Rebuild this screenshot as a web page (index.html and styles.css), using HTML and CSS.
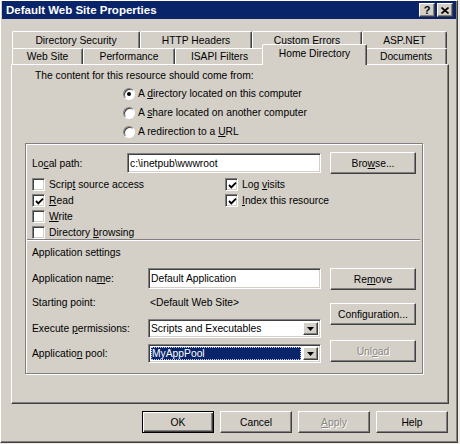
FILE: index.html
```html
<!DOCTYPE html>
<html lang="en">
<head>
<meta charset="utf-8">
<title>Default Web Site Properties</title>
<link rel="stylesheet" href="styles.css">
</head>
<body>
<div class="window">
  <div class="titlebar">
    <span class="title">Default Web Site Properties</span>
    <div class="caption-buttons">
      <span class="cap-btn cap-help">?</span>
      <span class="cap-btn">
        <svg width="8" height="7" viewBox="0 0 8 7"><path d="M0.5 0.5 L7.5 6.5 M7.5 0.5 L0.5 6.5" stroke="#000" stroke-width="1.6"/></svg>
      </span>
    </div>
  </div>

  <div class="client">
    <div class="tabs">
      <div class="tab-row tab-row-back">
        <span class="tab tab-dirsec">Directory Security</span>
        <span class="tab tab-http">HTTP Headers</span>
        <span class="tab tab-errors">Custom Errors</span>
        <span class="tab tab-aspnet">ASP.NET</span>
      </div>
      <div class="tab-row tab-row-front">
        <span class="tab tab-website">Web Site</span>
        <span class="tab tab-perf">Performance</span>
        <span class="tab tab-isapi">ISAPI Filters</span>
        <span class="tab tab-home selected">Home Directory</span>
        <span class="tab tab-docs">Documents</span>
      </div>
    </div>

    <div class="panel">
      <p class="prompt">The content for this resource should come from:</p>
      <div class="radios">
        <div class="radio"><span class="radio-dot on"></span><span>A <u>d</u>irectory located on this computer</span></div>
        <div class="radio"><span class="radio-dot"></span><span>A <u>s</u>hare located on another computer</span></div>
        <div class="radio"><span class="radio-dot"></span><span>A redirection to a <u>U</u>RL</span></div>
      </div>

      <div class="group">
        <div class="path-row">
          <span class="path-label">Lo<u>c</u>al path:</span>
          <span class="field path-field">c:\inetpub\wwwroot</span>
          <span class="btn browse-btn">Bro<u>w</u>se...</span>
        </div>

        <div class="checks">
          <div class="check"><span class="box"></span><span>Scrip<u>t</u> source access</span></div>
          <div class="check"><span class="box"><svg width="9" height="9" viewBox="0 0 9 9"><polyline points="1,4 3.3,6.3 8,1.6" fill="none" stroke="#000" stroke-width="1.9"/></svg></span><span>Log <u>v</u>isits</span></div>
          <div class="check"><span class="box"><svg width="9" height="9" viewBox="0 0 9 9"><polyline points="1,4 3.3,6.3 8,1.6" fill="none" stroke="#000" stroke-width="1.9"/></svg></span><span><u>R</u>ead</span></div>
          <div class="check"><span class="box"><svg width="9" height="9" viewBox="0 0 9 9"><polyline points="1,4 3.3,6.3 8,1.6" fill="none" stroke="#000" stroke-width="1.9"/></svg></span><span><u>I</u>ndex this resource</span></div>
          <div class="check"><span class="box"></span><span><u>W</u>rite</span></div>
          <div class="check-empty"></div>
          <div class="check"><span class="box"></span><span>Directory <u>b</u>rowsing</span></div>
        </div>

        <div class="separator"></div>
        <div class="app-title">Application settings</div>

        <div class="app">
          <div class="app-fields">
            <div class="app-row row-name">
              <span>Application na<u>m</u>e:</span>
              <span class="field">Default Application</span>
            </div>
            <div class="app-row row-start">
              <span>Starting point:</span>
              <span class="start-value">&lt;Default Web Site&gt;</span>
            </div>
            <div class="app-row row-exec">
              <span>Execute <u>p</u>ermissions:</span>
              <span class="field combo">
                <span class="combo-text">Scripts and Executables</span>
                <span class="combo-btn"><svg width="7" height="4" viewBox="0 0 7 4"><polygon points="0,0 7,0 3.5,4" fill="#000"/></svg></span>
              </span>
            </div>
            <div class="app-row row-pool">
              <span>Applicatio<u>n</u> pool:</span>
              <span class="field combo">
                <span class="combo-text"><span class="combo-sel">MyAppPool</span></span>
                <span class="combo-btn"><svg width="7" height="4" viewBox="0 0 7 4"><polygon points="0,0 7,0 3.5,4" fill="#000"/></svg></span>
              </span>
            </div>
          </div>
          <div class="app-buttons">
            <span class="btn btn-remove">Re<u>m</u>ove</span>
            <span class="btn btn-config">Confi<u>g</u>uration...</span>
            <span class="btn btn-unload disabled">Unl<u>o</u>ad</span>
          </div>
        </div>
      </div>
    </div>

    <div class="footer">
      <span class="btn dlg-btn btn-default">OK</span>
      <span class="btn dlg-btn">Cancel</span>
      <span class="btn dlg-btn disabled"><u>A</u>pply</span>
      <span class="btn dlg-btn">Help</span>
    </div>
  </div>
</div>
</body>
</html>
```

FILE: styles.css
```css
* {
  box-sizing: border-box;
}

html,
body {
  margin: 0;
  padding: 0;
}

body {
  width: 460px;
  height: 444px;
  overflow: hidden;
  background: #ece9e4;
  font-family: "Liberation Sans", Arial, sans-serif;
  font-size: 10.3px;
  color: #000;
}

u {
  text-decoration: underline;
  text-underline-offset: 1px;
}

/* window frame */
.window {
  width: 458px;
  height: 443px;
  background: #d4d0c8;
  border: 1px solid;
  border-color: #fff #404040 #404040 #fff;
  box-shadow: inset -1px -1px #808080;
  padding: 0 1px;
  display: flex;
  flex-direction: column;
}

.titlebar {
  height: 18px;
  background: #0a246a;
  display: flex;
  align-items: center;
  justify-content: space-between;
  padding: 0 3px 0 4px;
}

.title {
  color: #fff;
  font-weight: bold;
  font-size: 11.5px;
}

.caption-buttons {
  display: flex;
  gap: 2px;
}

.cap-btn {
  width: 16px;
  height: 14px;
  background: #d4d0c8;
  border: 1px solid;
  border-color: #fff #404040 #404040 #fff;
  box-shadow: inset -1px -1px #808080;
  display: flex;
  align-items: center;
  justify-content: center;
  font-weight: bold;
  font-size: 11px;
  line-height: 1;
}

.client {
  padding: 12px 0 0 9px;
  display: flex;
  flex-direction: column;
}

/* tab strip */
.tabs {
  margin-left: 1px;
  width: 435px;
}

.tab-row {
  display: flex;
}

.tab-row-back {
  height: 17px;
}

.tab-row-front {
  height: 16px;
}

.tab {
  flex: none;
  display: flex;
  align-items: center;
  justify-content: center;
  background: #d4d0c8;
  border-top: 1px solid #fff;
  border-left: 1px solid #fff;
  border-right: 1px solid #404040;
  box-shadow: inset -1px 0 #808080;
  border-radius: 2px 2px 0 0;
  white-space: nowrap;
}

.tab-dirsec { width: 128px; }
.tab-http { width: 112px; }
.tab-errors { width: 110px; }
.tab-aspnet { width: 85px; }
.tab-website { width: 71px; }
.tab-perf { width: 92px; }
.tab-isapi { width: 89px; }
.tab-docs { width: 82px; }

.tab-home {
  width: 105px;
}

.tab.selected {
  position: relative;
  z-index: 1;
  height: 21px;
  margin: -4px -2px -1px;
  padding-bottom: 3px;
}

/* page of the tab control */
.panel {
  width: 438px;
  height: 340px;
  border: 1px solid;
  border-color: #fff #404040 #404040 #fff;
  box-shadow: inset -1px -1px #808080;
  padding: 5px 0 0 13px;
}

.prompt {
  margin: 0 0 0 10px;
  line-height: 12px;
  height: 12px;
}

.radios {
  margin: 2px 0 0 98px;
  display: flex;
  flex-direction: column;
}

.radio {
  height: 19px;
  display: flex;
  align-items: center;
  gap: 3px;
}

.radio-dot {
  width: 12px;
  height: 12px;
  border-radius: 50%;
  background: #fff;
  border: 1px solid;
  border-color: #808080 #fff #fff #808080;
  box-shadow: inset 1px 1px #404040;
  display: grid;
  place-items: center;
}

.radio-dot.on::after {
  content: "";
  width: 4px;
  height: 4px;
  border-radius: 50%;
  background: #000;
}

/* frame around path and application settings */
.group {
  margin-top: 2px;
  width: 398px;
  height: 231px;
  border: 1px solid #808080;
  box-shadow: inset 1px 1px #fff, 1px 1px #fff;
  padding: 8px 0 0 6px;
}

.path-row {
  height: 22px;
  display: flex;
  align-items: center;
}

.path-label {
  width: 95px;
}

.field {
  display: flex;
  align-items: center;
  background: #fff;
  border: 1px solid;
  border-color: #808080 #fff #fff #808080;
  box-shadow: inset 1px 1px #404040, inset -1px -1px #d4d0c8;
  padding: 0 2px;
  white-space: nowrap;
  overflow: hidden;
}

.path-field {
  width: 194px;
  height: 20px;
}

.btn {
  display: flex;
  align-items: center;
  justify-content: center;
  height: 22px;
  background: #d4d0c8;
  border: 1px solid;
  border-color: #fff #404040 #404040 #fff;
  box-shadow: inset -1px -1px #808080;
  white-space: nowrap;
}

.btn.disabled {
  color: #8a8780;
  text-shadow: 1px 1px #fff;
}

.browse-btn {
  margin-left: 9px;
  width: 86px;
}

.checks {
  margin-top: 4px;
  display: grid;
  grid-template-columns: 193px 1fr;
  grid-auto-rows: 13px;
  row-gap: 3px;
}

.check {
  display: flex;
  align-items: center;
  gap: 4px;
}

.box {
  width: 13px;
  height: 13px;
  flex: none;
  background: #fff;
  border: 1px solid;
  border-color: #808080 #fff #fff #808080;
  box-shadow: inset 1px 1px #404040, inset -1px -1px #d4d0c8;
  display: flex;
  align-items: center;
  justify-content: center;
  padding: 1px 0 0 1px;
}

.separator {
  width: 393px;
  margin-left: -5px;
  height: 2px;
  border-top: 1px solid #808080;
  border-bottom: 1px solid #fff;
}

.app-title {
  margin-top: 5px;
  line-height: 13px;
}

.app {
  margin-top: 9px;
  display: flex;
}

.app-fields {
  width: 289px;
  display: flex;
  flex-direction: column;
}

.app-row {
  display: grid;
  grid-template-columns: 116px 173px;
  align-items: center;
}

.app-row > .field {
  height: 100%;
}

.row-name { height: 21px; }
.row-start { height: 18px; margin-top: 4px; }
.row-exec { height: 19px; margin-top: 8px; }
.row-pool { height: 19px; margin-top: 6px; }

.start-value {
  padding-left: 2px;
}

.combo {
  padding: 2px;
}

.combo-text {
  flex: 1;
  height: 100%;
  display: flex;
  align-items: center;
  overflow: hidden;
}

.combo-sel {
  display: flex;
  align-items: center;
  width: 100%;
  height: 100%;
  background: #0a246a;
  color: #fff;
  outline: 1px dotted #c8c8ff;
  outline-offset: -1px;
  padding-left: 1px;
  margin-right: 2px;
}

.combo-btn {
  flex: none;
  width: 15px;
  height: 100%;
  background: #d4d0c8;
  border: 1px solid;
  border-color: #fff #404040 #404040 #fff;
  box-shadow: inset -1px -1px #808080;
  display: flex;
  align-items: center;
  justify-content: center;
}

.app-buttons {
  margin-left: 9px;
  width: 86px;
  display: flex;
  flex-direction: column;
}

.btn-config { margin-top: 13px; }
.btn-unload { margin-top: 15px; }

/* dialog buttons */
.footer {
  margin-top: 7px;
  width: 437px;
  display: flex;
  justify-content: flex-end;
  gap: 6px;
}

.dlg-btn {
  width: 72px;
}

.btn-default {
  border-color: #000;
  box-shadow: inset 1px 1px #fff, inset -1px -1px #404040, inset -2px -2px #808080;
}
```
